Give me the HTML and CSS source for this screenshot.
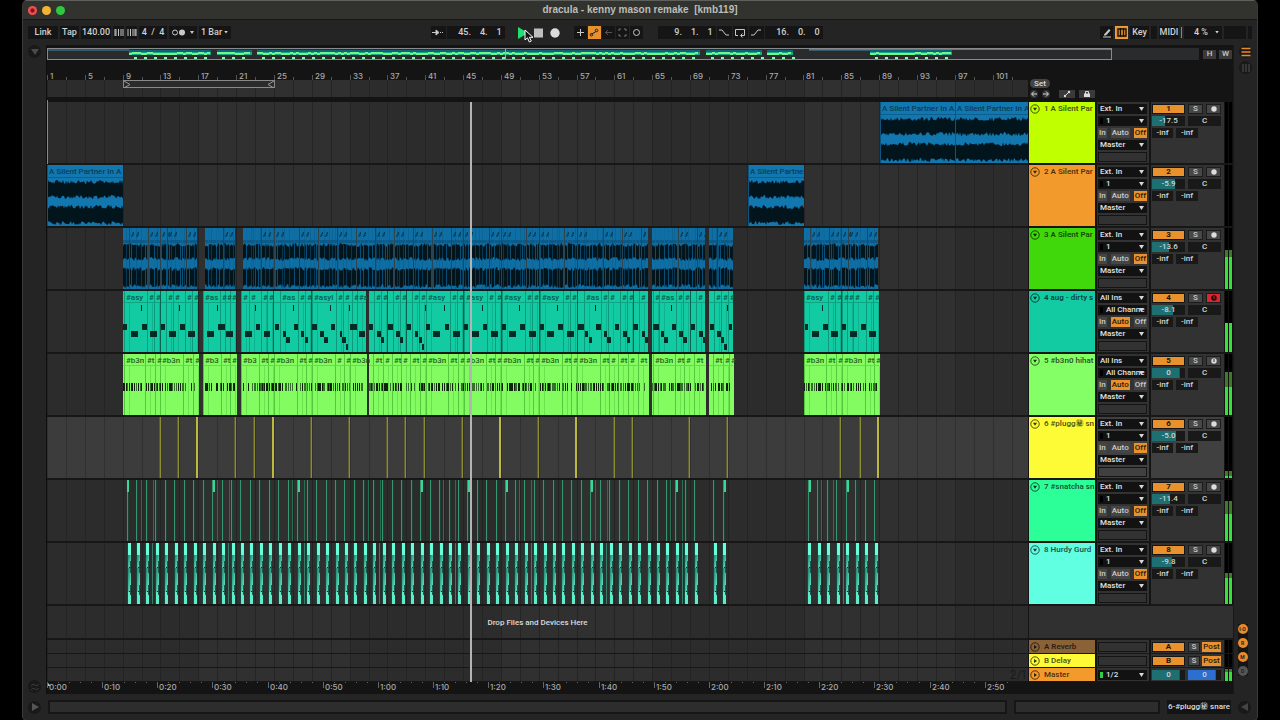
FILE: index.html
```html
<!DOCTYPE html>
<html lang="en">
<head>
<meta charset="utf-8">
<title>dracula - kenny mason remake [kmb119]</title>
<link rel="stylesheet" href="styles.css">
</head>
<body>
<div class="window">
  <header class="titlebar">
    <div class="lights"><button class="light red" aria-label="Close"></button><button class="light amber" aria-label="Minimise"></button><button class="light green" aria-label="Zoom"></button></div>
    <h1 class="title">dracula - kenny mason remake&nbsp; [kmb119]</h1>
  </header>

  <div class="transport">
    <div class="group start">
      <button class="cell w30">Link</button>
      <button class="cell w18">Tap</button>
      <input class="cell w30" aria-label="Tempo" value="140.00">
      <button class="cell w11" aria-label="Nudge down"><svg width="10" height="9"><path d="M1 1v7M2 1v7M4.500 1v7M7 1v7M9 1v7" class="stroke"/></svg></button>
      <button class="cell w11" aria-label="Nudge up"><svg width="10" height="9"><path d="M1 1v7M3.500 1v7M6 1v7M8 1v7M9 1v7" class="stroke"/></svg></button>
      <input class="cell w28" aria-label="Time signature" value="4  /  4">
      <button class="cell w28" aria-label="Metronome"><svg width="24" height="9"><circle cx="4" cy="4.500" r="2.500" class="stroke"/><circle cx="11" cy="4.500" r="3" class="solid"/><path d="M19 3h4l-2 3z" class="solid"/></svg></button>
      <span class="pick w32"><select class="cell" aria-label="Quantization"><option>1 Bar</option></select></span>
    </div>
    <div class="group middle">
      <button class="cell w14" aria-label="Follow"><svg width="12" height="9"><path d="M0 4.500h5M4 2l3 2.500L4 7zM8 4.500h1M10 4.500h1" class="stroke fillin"/></svg></button>
      <input class="cell w58 num" aria-label="Position" value="45.    4.    1">
      <span class="play">
        <button class="bare" aria-label="Play"><svg width="14" height="14"><path d="M2 1l10 6-10 6z" fill="#1fe070"/></svg></button>
        <button class="bare" aria-label="Stop"><svg width="12" height="14"><path d="M1 2.500h9v9H1z" fill="#bfbfbf"/></svg></button>
        <button class="bare" aria-label="Record"><svg width="14" height="14"><circle cx="7" cy="7" r="4.700" fill="#dcdcdc"/></svg></button>
        <svg class="pointer" width="10" height="14"><path d="M1 1v10l2.500-2.200L5.300 13l2-1-1.900-3.700H9z" fill="#111" stroke="#fff"/></svg>
      </span>
      <button class="cell w12" aria-label="Overdub"><svg width="9" height="9"><path d="M4.500 1v7M1 4.500h7" class="stroke"/></svg></button>
      <button class="cell w12 lit" aria-label="Automation arm"><svg width="10" height="9"><path d="M2.500 6.500L4 5l2-.5L7.500 3" stroke="#222" fill="none"/><circle cx="2.500" cy="6.700" r="1.300" fill="none" stroke="#222"/><circle cx="7.500" cy="2.500" r="1.300" fill="none" stroke="#222"/></svg></button>
      <button class="cell w12" aria-label="Re-enable automation"><svg width="9" height="9"><path d="M8 4.500H1M4 2L1.500 4.500 4 7" stroke="#555" fill="none"/></svg></button>
      <button class="cell w12" aria-label="Capture"><svg width="9" height="9"><path d="M1 3V1h2M6 1h2v2M8 6v2H6M3 8H1V6" stroke="#777" fill="none"/></svg></button>
      <button class="cell w12" aria-label="Session record"><svg width="9" height="9"><circle cx="4.500" cy="4.500" r="3" class="stroke"/></svg></button>
      <input class="cell w58 num loopstart" aria-label="Loop start" value="9.    1.    1">
      <button class="cell w14" aria-label="Punch in"><svg width="12" height="9"><path d="M1 2h3l4 5h3" class="stroke"/></svg></button>
      <button class="cell w14" aria-label="Loop"><svg width="12" height="10"><path d="M4 7.500H1.500v-6h9v6H7M8.500 5.500L6.500 7.500l2 2" class="stroke"/></svg></button>
      <button class="cell w14" aria-label="Punch out"><svg width="12" height="9"><path d="M1 7h3l4-5h3" class="stroke"/></svg></button>
      <input class="cell w58 num" aria-label="Loop length" value="16.    0.    0">
    </div>
    <div class="group end">
      <button class="cell w12" aria-label="Draw mode"><svg width="10" height="10"><path d="M2 6.500L7 1l1.500 1.500L4 7.500H2z" class="solid"/><path d="M1 9h8" class="stroke"/></svg></button>
      <button class="cell w12 keys" aria-label="Computer keyboard"><svg width="10" height="9"><path d="M1 1h8v7H1zM3.500 0v9M6.500 0v9" fill="none" stroke="#1c1208" stroke-width="1.400"/></svg></button>
      <button class="cell w18">Key</button>
      <span class="cell w6"></span>
      <button class="cell w20">MIDI</button>
      <span class="bar"></span>
      <span class="pick w38"><select class="cell" aria-label="CPU load"><option>4 %</option></select></span>
      <span class="cell w22"></span>
      <span class="cell w4"></span>
    </div>
  </div>

  <main class="main">
    <aside class="rail left">
      <button class="round" aria-label="Overview"><svg width="12" height="12"><path d="M2 3h8L6 9z" fill="#4a4a4a"/></svg></button>
      <button class="round" aria-label="Automation"><svg width="12" height="12"><path d="M2 5q2-3 4-1t4-1M2 9q2-3 4-1t4-1" fill="none" stroke="#3a3a3a"/></svg></button>
    </aside>

    <section class="arranger">
      <div class="overview">
        <div class="minimap" id="minimap"></div>
        <button class="hw">H</button><button class="hw">W</button>
      </div>
      <div class="top">
        <div class="timeline">
          <div class="ruler" id="ruler"></div>
          <div class="scrub grid"><div class="loop"><svg width="7" height="7"><path d="M0 0l6 3.500L0 7" fill="none" stroke="#999"/></svg><svg width="7" height="7"><path d="M7 0L1 3.500 7 7" fill="none" stroke="#999"/></svg></div></div>
        </div>
        <div class="locators">
          <button class="set">Set</button>
          <div class="tools">
            <button class="dot" aria-label="Previous locator"><svg width="8" height="8"><path d="M7 4H2M4 1.500L1.500 4 4 6.500" stroke="#ddd" fill="none"/></svg></button>
            <button class="dot" aria-label="Next locator"><svg width="8" height="8"><path d="M1 4h5M4 1.500L6.500 4 4 6.500" stroke="#ddd" fill="none"/></svg></button>
            <button class="tool" aria-label="Automation mode"><svg width="8" height="8"><path d="M1.500 6.500l5-5" stroke="#ddd"/><circle cx="2" cy="6" r="1.200" fill="#ddd"/><circle cx="6" cy="2" r="1.200" fill="#ddd"/></svg></button>
            <button class="tool" aria-label="Lock envelopes"><svg width="8" height="8"><path d="M1 3.500h6V7H1z" fill="#ddd"/><path d="M2.500 4V1.500h3V4" stroke="#ddd" fill="none"/></svg></button>
          </div>
        </div>
      </div>
      <div class="tracks" id="tracks"></div>
      <div class="times" id="times"></div>
    </section>

    <aside class="rail right">
      <div class="views">
        <button class="round" aria-label="Arrangement view"><svg width="12" height="12"><path d="M1.500 2.500h9M1.500 6h9M1.500 9.500h9" stroke="#e98b2c" stroke-width="1.600"/></svg></button>
        <button class="round" aria-label="Session view"><svg width="12" height="12"><path d="M3 2v8M6 2v8M9 2v8" stroke="#555"/></svg></button>
      </div>
      <div class="toggles">
        <button class="tog">I·O</button><button class="tog">R</button><button class="tog">M</button><button class="tog off">D</button>
      </div>
    </aside>
  </main>

  <footer class="status">
    <button class="round" aria-label="Show clip view"><svg width="12" height="12"><path d="M3 2l7 4-7 4z" fill="#555"/></svg></button>
    <div class="box wide"></div>
    <div class="box small"></div>
    <div class="sel">6-#plugg㊙ snare</div>
    <button class="round" aria-label="Show device view"><svg width="12" height="12"><path d="M9 2L2 6l7 4z" fill="#444"/></svg></button>
  </footer>
</div>
<script src="app.js"></script>
</body>
</html>
```
FILE: styles.css
```css
* { box-sizing: border-box; }
html, body { margin: 0; background: #000; }
body { font: 500 8px/10px Roboto, "Noto Sans", "Noto Sans CJK JP", sans-serif; color: #d0d0d0; }
button, input, select { font: inherit; color: inherit; border: 0; border-radius: 0; padding: 0; margin: 0; background: none; appearance: none; }
button { display: flex; align-items: center; justify-content: center; white-space: nowrap; }
svg { display: block; flex: none; }
.stroke { fill: none; stroke: #c8c8c8; }
.solid, .fillin { fill: #c8c8c8; }

.window { margin: 0 22px; min-height: 100vh; background: #242424; border: 1px solid #3a3a3a; border-top-color: #5e605c; border-radius: 5px; display: flex; flex-direction: column; overflow: hidden; }
.titlebar { display: grid; grid-template-columns: 1fr auto 1fr; align-items: center; height: 19px; background: #32332e; border-bottom: 1px solid #161616; }
.lights { display: flex; gap: 5px; padding-left: 5px; }
.light { width: 9px; height: 9px; border-radius: 50%; }
.red { background: radial-gradient(#8c0f14 20%, #ed5055 45%); }
.amber { background: #f0b434; }
.green { background: #2fc840; }
.title { margin: 0; font: bold 10px/14px "Liberation Sans", sans-serif; color: #bdbdb8; }

.transport { display: grid; grid-template-columns: 15fr auto 16fr; align-items: center; height: 25px; padding: 0 5px; }
.group { display: flex; gap: 2px; align-items: center; }
.end { justify-content: flex-end; }
.middle { gap: 1px; }
.cell { background: #151515; height: 13px; text-align: center; font-size: 9px; line-height: 13px; color: #d0d0d0; }
input.cell { white-space: pre; }
.w4 { width: 4px; } .w6 { width: 6px; } .w11 { width: 11px; } .w12 { width: 13px; } .w14 { width: 15px; } .w18 { width: 19px; } .w20 { width: 20px; }
.w22 { width: 22px; } .w28 { width: 28px; } .w30 { width: 30px; } .w32 { width: 32px; } .w38 { width: 38px; } .w58 { width: 58px; }
input.num { text-align: right; padding-right: 3px; }
.loopstart { margin-left: 14px; }
.lit { background: #e8912d; }
.keys { background: #e8912d; border: 1px solid #f0a040; }
.bar { width: 1px; height: 11px; background: #c07a20; }
.play { display: flex; gap: 3px; padding: 0 11px 0 10px; position: relative; }
.pointer { position: absolute; left: 18px; top: 3px; }
.pick { position: relative; display: block; min-width: 0; }
.pick select { width: 100%; display: block; text-align: left; padding-left: 2px; }
.pick::after { content: ""; position: absolute; right: 3px; top: calc(50% - 2px); width: 5px; height: 4px; background: #d8d8d8; clip-path: polygon(0 0, 100% 0, 50% 100%); pointer-events: none; }
.transport .pick::after { width: 4px; height: 3px; }
.transport .w38 select { padding-left: 10px; }

.main { display: grid; grid-template-columns: 23px 1fr 24px; flex: 1; }
.rail { display: flex; flex-direction: column; align-items: center; justify-content: space-between; }
.left { padding-bottom: 1px; }
.round { width: 13px; height: 13px; border-radius: 50%; background: #191919; }
.right { padding-bottom: 18px; border-left: 1px solid #191919; }
.views { display: flex; flex-direction: column; gap: 3px; }
.toggles { display: flex; flex-direction: column; gap: 4px; margin-right: 6px; background: #151515; }
.tog { width: 10px; height: 10px; border-radius: 50%; background: #e98b2c; color: #222; font-size: 5px; line-height: 10px; font-weight: 700; }
.tog.off { background: #555; }

.arranger { background: #141414; min-width: 0; border-left: 1px solid #0e0e0e; }
.overview { display: flex; align-items: center; gap: 3px; height: 15px; padding: 3px 1px 0 0; }
.minimap { flex: 1; height: 12px; background: #2a2b2c; overflow: hidden; margin-right: 1px; }
.hw { width: 13px; height: 9px; background: #3a3a3a; color: #ccc; }
.top { display: grid; grid-template-columns: 1fr 205px; height: 42px; }
.timeline { min-width: 0; }
.ruler { height: 20px; overflow: hidden; }
.grid { background-color: #2e2e2e; background-image: repeating-linear-gradient(90deg, #242424 0 1px, transparent 1px calc(100% / 51.87)), repeating-linear-gradient(90deg, #2c2c2c 0 152px, #303030 152px 303px); }
.scrub { height: 17px; }
.loop { display: flex; justify-content: space-between; margin-left: 76px; width: 152px; height: 8px; border: 1px solid #888; position: relative; background: #2b2b2b; }
.locators { padding: 19px 0 0 2px; }
.set { width: 20px; height: 9px; border-radius: 5px; background: #444; color: #ddd; }
.tools { display: flex; gap: 4px; margin-top: 2px; }
.dot { width: 8px; height: 8px; border-radius: 50%; background: #333; }
.tool { width: 16px; height: 8px; background: #3a3a3a; margin-left: 5px; }
.tool + .tool { margin-left: 0; }

.tracks { position: relative; }
.playhead { position: absolute; left: 423px; top: 0; bottom: 0; width: 2px; background: #b4b4b4; }
.startmark { position: absolute; left: 0; top: -2px; height: 64px; border-left: 1px solid #4fa0a5; }
.row { display: grid; grid-template-columns: 1fr 66px 53px 74px 8px; column-gap: 1px; border-bottom: 2px solid #171717; }
.lane { min-width: 0; overflow: hidden; height: 61px; }
.lane.selected { background-color: #3c3c3c; background-image: repeating-linear-gradient(90deg, #303030 0 1px, transparent 1px calc(100% / 51.87)); }
.name { display: flex; gap: 5px; padding: 2px 1px 0; white-space: nowrap; font-weight: 600; color: rgba(0, 0, 0, .7); min-width: 0; }
.name svg { margin-right: -1px; }
.io, .mix { background: #323232; display: flex; flex-direction: column; gap: 2px; padding: 2px 2px 0 1px; min-width: 0; margin-left: 1px; }
.picked .io, .picked .mix { background: #404040; }
.io .pick { height: 10px; }
.io select { height: 10px; background: #121212; color: #e0e0e0; font-size: 8px; line-height: 10px; }
.io .chan select { padding-left: 8px; }
.io .chan::before { content: ""; position: absolute; left: 2px; top: 2px; width: 3px; height: 6px; background: #000; }
.io .stereo::before { background: #30d040; }
.mon { display: flex; justify-content: space-between; gap: 2px; }
.mon button { height: 10px; background: #454545; padding: 0 1px; color: #ccc; }
.mon .on { background: #e8912d; color: #2a1a08; }
.slot { height: 10px; border: 1px solid #141414; }
.pair { display: grid; grid-template-columns: 33px 33px; gap: 3px; }
.half { display: grid; grid-template-columns: 1fr 1fr; gap: 3px; }
.half.post { grid-template-columns: 12px 1fr; gap: 2px; }
.infs { display: grid; grid-template-columns: 21px 22px; gap: 3px; }
.mix button, .val { height: 10px; line-height: 10px; text-align: center; }
.act { background: #e8912d; color: #241505; border: 1px solid #151515; font-weight: 700; }
.sq { background: #474747; color: #ccc; border: 1px solid #1c1c1c; }
.sq.armed { background: #d8272f; }
.sq.sendpost { background: #e8912d; color: #2a1a08; border: 0; }
.val { background: #191919; color: #d4d4d4; width: 100%; min-width: 0; }
.vol { background: linear-gradient(#1d6f72, #1d6f72) 0 0 / var(--v) 100% no-repeat #191919; }
.blue { background-image: linear-gradient(#2c6fd0, #2c6fd0); }
.meter { background: #101010; display: flex; gap: 1px; align-items: stretch; padding-right: 1px; }
.meter i { flex: 1; background: linear-gradient(0deg, #35e23a var(--l), #3f7a2c var(--l) var(--p), #000 var(--p)); }
.drop .lane { height: 32px; text-align: center; line-height: 34px; color: #ddd; }
.drop .rest { grid-column: 2 / -1; background: #303030; }
.return { border-bottom-width: 1px; }
.return .lane { height: 13px; position: relative; }
.return .quant { position: absolute; right: 2px; top: 1px; font: 12px/12px Inter, sans-serif; color: #1b1b1b; }
.times { height: 12px; overflow: hidden; margin-right: 205px; }

.status { display: grid; grid-template-columns: 13px minmax(0, 959px) minmax(0, 1fr) auto 13px; align-items: center; gap: 7px; height: 26px; padding: 0 6px 0 5px; }
.box { height: 14px; background: #2d2d2d; border: 2px solid #161616; }
.sel { height: 14px; line-height: 14px; padding: 0 1px; background: #141414; color: #ddd; font-weight: 500; }

.lbl { font: 500 8px Inter, sans-serif; fill: #aaa; }
.clipname { font: 500 8px Roboto, sans-serif; }
```
FILE: app.js
```js
const BAR = 9.456;
const ORIGIN = 47;
const W = 1400;
const barX = b => (b - 1) * BAR + 0.5;

let seed = 7;
const rnd = () => (seed = (seed * 16807) % 2147483647) / 2147483647;

const rect = (x, y, w, h, fill) => `<rect x="${x}" y="${y}" width="${w}" height="${h}" fill="${fill}"/>`;
const svg = (h, body) => `<svg width="${W}" height="${h}">${body}</svg>`;
const label = (x, w, text, fill) =>
  `<svg x="${x}" y="0" width="${w}" height="12"><text class="clipname" x="0" y="9" fill="${fill}">${text}</text></svg>`;

/* Ragged dark band of an audio clip */
function wave(x0, x1, top, bottom) {
  const up = [], down = [];
  for (let x = x0; x <= x1; x += 1) {
    up.push(`${x},${(top + rnd() * 4).toFixed(1)}`);
    down.unshift(`${x},${(bottom - rnd() * 4).toFixed(1)}`);
  }
  return `<polygon points="${up.concat(down).join(' ')}" fill="#02151d"/>`;
}

function audio(clips) {
  return clips.map(([a, b, text]) => {
    a -= ORIGIN; b -= ORIGIN;
    return rect(a, 0, b - a, 61, '#1277ae') + rect(a, 12, b - a, 1, '#0d5f8e') +
      wave(a, b, 15, 34) + wave(a, b, 40, 60) + rect(a, 0, 1, 61, '#0b5580') +
      label(a + 2, b - a - 2, text, '#073c5c');
  }).join('');
}

const BLOCKS = [[123, 198], [203, 236], [241, 366], [369, 648], [652, 705], [709, 733], [804, 879]];

function chops() {
  const blocks = [[123, 197], [205, 235], [243, 648], [652, 705], [709, 733], [804, 878]];
  const cuts = [129, 148, 160, 167, 186, 223, 261, 274, 299, 318, 337, 356, 375, 394, 413, 432, 451, 463, 489, 501, 526, 539, 564, 577, 603, 622, 641, 678, 697, 717, 810, 829, 841, 848, 867];
  let s = '';
  for (const [a, b] of blocks) {
    const x = a - ORIGIN, w = b - a;
    s += rect(x, 0, w, 61, '#0f6ea4') + rect(x, 12, w, 3, '#0b5a88') + wave(x, x + w, 15, 33) + wave(x, x + w, 39, 60);
    for (let p = x + 3; p < x + w - 1; p += 2 + Math.floor(rnd() * 4)) s += rect(p, 0, 1, 61, rnd() > .5 ? '#0b588480' : '#0d6a9db0');
  }
  for (const c of cuts) {
    s += rect(c - ORIGIN, 0, 1, 61, '#2b4450');
    s += label(c - ORIGIN + 2, 3, 'A', '#063650') + label(c - ORIGIN + 7, 3, 'A', '#063650');
  }
  return s;
}

const CHOP_LABELS = [[126, '#asy'], [149], [156], [168], [175], [187], [194], [205, '#as'], [222], [227], [232], [243], [251], [263], [269], [282, '#as'], [300], [307], [314, '#asyl'], [338], [345], [354], [359, '#a'], [376], [383], [395], [402], [414], [421], [428, '#asy'], [452], [459], [466, '#asy'], [489], [497], [504, '#asy'], [527], [534], [542, '#asy'], [565], [572], [586, '#as'], [603], [610], [622], [629], [641], [655], [661, '#as'], [678], [685], [698], [716], [723], [730], [806, '#asy'], [830], [837], [844], [849], [855], [868], [875]];
const HAT_LABELS = [[126, '#b3n'], [147, '#t'], [157], [162, '#b3n'], [185, '#t'], [195], [205, '#b3'], [223, '#t'], [232], [243, '#b3'], [261, '#t'], [270], [276, '#b3n'], [299, '#t'], [308], [314, '#b3n'], [337], [346], [352, '#b3n'], [375, '#t'], [385], [394, '#t'], [403], [412, '#t'], [422], [428, '#b3n'], [450, '#t'], [460], [466, '#b3n'], [488, '#t'], [497], [503, '#b3n'], [526, '#t'], [535], [541, '#b3n'], [564, '#t'], [573], [579, '#b3n'], [602, '#t'], [611], [620, '#t'], [630], [640, '#t'], [655, '#b3n'], [677, '#t'], [686], [696, '#t'], [715, '#t'], [725], [731], [806, '#b3n'], [828, '#t'], [838], [844, '#b3n'], [867, '#t'], [876]];

const names = (list, fill) => list.map(([x, t = '#']) => label(x - ORIGIN, [0, 5, 8, 14, 18, 21][t.length], t, fill)).join('');
const seams = (list, fill) => list.map(([x]) => rect(x - ORIGIN - 2, 0, 1, 61, fill) + (x < 729 || x > 740 ? rect(x - ORIGIN + 3, 12, 1, 49, fill + '80') : '')).join('');

const NOTES = {
  33: [[123, 4], [142, 5], [161, 4], [180, 5], [218, 7], [256, 4], [275, 4], [294, 4], [312, 5], [331, 4], [350, 7], [369, 4], [388, 5], [407, 4], [426, 4], [445, 4], [464, 4], [483, 4], [502, 4], [520, 5], [540, 4], [558, 5], [578, 6], [596, 5], [615, 4], [633, 5], [653, 6], [672, 4], [691, 4], [710, 4], [729, 3], [805, 3], [823, 5], [842, 4], [861, 5]],
  40: [[131, 7], [150, 7], [169, 7], [188, 7], [207, 7], [226, 7], [245, 7], [264, 6], [283, 3], [301, 3], [320, 4], [340, 2], [359, 6], [377, 4], [396, 4], [415, 3], [433, 7], [453, 7], [472, 7], [491, 7], [509, 7], [529, 7], [547, 7], [567, 7], [585, 3], [604, 3], [623, 4], [642, 3], [661, 3], [679, 4], [699, 4], [717, 4], [812, 7], [831, 7], [850, 7], [869, 7]],
  46: [[286, 4], [305, 3], [324, 4], [342, 4], [381, 3], [400, 3], [419, 3], [589, 3], [607, 4], [627, 3], [645, 3], [664, 4], [683, 4], [703, 2], [721, 3]],
  53: [[346, 2], [422, 2], [724, 3]],
  14: [[141, 1], [179, 1], [217, 1], [255, 1], [293, 1], [330, 1], [349, 1], [425, 1], [444, 1], [482, 1], [519, 1], [557, 1], [595, 1], [671, 1], [727, 1], [822, 1]]
};

function melody() {
  let s = BLOCKS.map(([a, b]) => rect(a - ORIGIN, 0, b - a, 61, '#12cba2')).join('');
  s += seams(CHOP_LABELS, '#0b9a7c');
  s += BLOCKS.map(([a, b]) => rect(a - ORIGIN, 11, b - a, 1, '#0fa384')).join('');
  s += [160, 273, 311, 387, 406, 463, 501, 539, 577, 633, 690, 841].map(x => rect(x - ORIGIN, 0, 1, 61, '#08624f')).join('');
  for (const y in NOTES) s += NOTES[y].map(([x, w]) => rect(x - ORIGIN, y, w, 6, '#042b24')).join('');
  return s + names(CHOP_LABELS, '#075c4b');
}

function hats() {
  let s = BLOCKS.map(([a, b]) => rect(a - ORIGIN, 0, b - a + 1, 61, '#83fc62')).join('');
  s += seams(HAT_LABELS, '#55c73c');
  for (const [a, b] of BLOCKS) {
    s += rect(a - ORIGIN, 11, b - a, 1, '#6ad850');
    for (let x = a; x < b - 1; x += 1 + Math.floor(rnd() * 2)) {
      const t = rnd();
      if (t > .2) s += rect(x - ORIGIN, 29, 1, 8, t > .55 ? '#0c2408' : '#33702a');
    }
  }
  return s + names(HAT_LABELS, '#23631a');
}

function rolls() {
  const thin = [160, 178, 235, 254, 311, 349, 387, 405, 424, 462, 538, 614, 632, 689, 727, 840, 860];
  const wide = [196, 272, 499, 575, 877];
  return thin.map(x => rect(x - ORIGIN - 1, 0, 1, 61, '#5d5c2a') + rect(x - ORIGIN, 0, 1, 61, '#8e8c30')).join('') +
    wide.map(x => rect(x - ORIGIN, 0, 2, 61, '#bdb93c')).join('');
}

const beats = () => {
  const out = [];
  for (let k = 0; k < 80; k++) {
    const x = 127.5 + k * BAR;
    if ((x > 648 && x < 655) || (x > 700 && x < 712) || (x > 730 && x < 804)) continue;
    out.push(x - ORIGIN);
  }
  return out;
};

function snares() {
  const heads = [127, 213, 298, 421, 468, 506, 591, 676, 724, 809, 847];
  let s = beats().map(x => rect(Math.floor(x), 0, 1, 61, '#37966f') + rect(Math.floor(x) + 1, 0, 1, 61, '#1a4234')).join('');
  for (let k = 0; k < 10; k++) for (const d of [141, 153]) {
    const x = Math.round(d + k * 75.6);
    if (x < 733 || x > 804) s += rect(x - ORIGIN, 0, 1, 61, '#26704f');
  }
  return s + heads.map(x => rect(x - ORIGIN, 0, 2, 12, '#37d898')).join('');
}

function kicks() {
  return '<defs><linearGradient id="tail" x1="0" x2="1" y1="0" y2="1"><stop offset="0" stop-color="#23806b"/><stop offset="1" stop-color="#62f5d2"/></linearGradient></defs>' +
    beats().map((v, i) => {
      const x = Math.round(v);
      return rect(x - 1, 0, 1, 61, '#144a3d') + rect(x, 0, 3, 12, '#66ffdc') + rect(x, 12, 3, 13, 'url(#tail)') +
        rect(x, 25, 3, 24, 'url(#tail)') + rect(x, 49, 3, 12, '#5ceecb') +
        rect(x + 1, 24, 3, 1, '#0a2a22') + rect(x + 1, 48, 3, 1, '#0a2a22') + rect(x + 2, 18, 1, 12, '#1c5c4c') + rect(x + 2, 42, 1, 10, '#1c5c4c') +
        (i % 8 === 2 ? rect(x + 6, 0, 1, 61, '#3a7a68') : '');
    }).join('');
}

const LONG = 'A Silent Partner In A';
const TRACKS = [
  ['1 A Silent Par', '#bfff00', audio([[880, 955, LONG], [955, 1028, LONG]]), '-17.5', 40, 0, 0],
  ['2 A Silent Par', '#f39a2c', audio([[47, 123, LONG], [748, 804, 'A Silent Partner']]), '-5.9', 70, 0, 0],
  ['3 A Silent Par', '#40d80a', chops(), '-13.6', 52, 52, 64],
  ['4 aug - dirty s', '#12cba2', melody(), '-8.1', 64, 47, 47, 'midi armed'],
  ['5 #b3n0 hihat', '#85ff66', hats(), '0', 84, 46, 70, 'midi'],
  ['6 #plugg㊙ sn', '#fdfb35', rolls(), '-5.0', 74, 3, 12, 'picked'],
  ['7 #snatcha sn', '#2dff98', snares(), '-11.4', 56, 44, 65],
  ['8 Hurdy Gurd', '#60ffe2', kicks(), '-9.8', 60, 43, 50]
];

const fold = open => `<svg width="10" height="10"><circle cx="5" cy="5" r="4.200" fill="none" stroke="#000a"/><path d="${open ? 'M3 3.800h4L5 6.800z' : 'M4 3l3 2-3 2z'}" fill="#000c"/></svg>`;
const pick = (name, text, cls = '') => `<span class="pick ${cls}"><select aria-label="${name}"><option>${text}</option></select></span>`;
const meter = (l, p) => `<div class="meter"><i style="--l:${l}%;--p:${p}%"></i><i style="--l:${l}%;--p:${p}%"></i></div>`;
const val = (name, v, cls = '', fill) => `<input class="val ${cls}" aria-label="${name}" value="${v}"${fill ? ` style="--v:${fill}%"` : ''}>`;

const rows = TRACKS.map(([name, color, body, vol, fill, l, p, flags = ''], i) => {
  const midi = flags.includes('midi'), armed = flags.includes('armed');
  const dot = `<svg width="8" height="8"><circle cx="4" cy="4" r="2.700" fill="${armed ? '#220507' : '#ddd'}"/>${midi ? `<path d="M4 2v3" stroke="${armed ? '#d8272f' : '#333'}"/>` : ''}</svg>`;
  return `<div class="row ${flags}">
    <div class="lane grid ${flags === 'picked' ? 'selected' : ''}">${svg(61, body)}</div>
    <div class="name" style="background:${color}">${fold(true)}<span>${name}</span></div>
    <div class="io">
      ${pick('Input type', midi ? 'All Ins' : 'Ext. In')}
      ${pick('Input channel', midi ? 'All Channe' : '1', 'chan')}
      <div class="mon"><button>In</button><button class="${midi ? 'on' : ''}">Auto</button><button class="${midi ? '' : 'on'}">Off</button></div>
      ${pick('Output', 'Master')}
      <div class="slot"></div>
    </div>
    <div class="mix">
      <div class="pair"><button class="act">${i + 1}</button><div class="half"><button class="sq">S</button><button class="sq ${armed ? 'armed' : ''}" aria-label="Arm">${dot}</button></div></div>
      <div class="pair">${val('Volume', vol, 'vol', fill)}${val('Pan', 'C')}</div>
      <div class="infs">${val('Send A', '-inf')}${val('Send B', '-inf')}</div>
    </div>
    ${meter(l, p)}
  </div>`;
});

rows.push('<div class="row drop"><div class="lane grid">Drop Files and Devices Here</div><div class="rest"></div></div>');

for (const [n, name, color] of [['A', 'A Reverb', '#8a6238'], ['B', 'B Delay', '#fdfb35']]) {
  rows.push(`<div class="row return"><div class="lane grid"></div>
    <div class="name" style="background:${color}">${fold(false)}<span>${name}</span></div>
    <div class="io"><div class="slot"></div></div>
    <div class="mix"><div class="pair"><button class="act">${n}</button><div class="half post"><button class="sq">S</button><button class="sq sendpost">Post</button></div></div></div>
    ${meter(0, 0)}</div>`);
}
rows.push(`<div class="row return"><div class="lane grid"><span class="quant">2/1</span></div>
  <div class="name" style="background:#f39a2c">${fold(false)}<span>Master</span></div>
  <div class="io">${pick('Master output', '1/2', 'chan stereo')}</div>
  <div class="mix"><div class="pair">${val('Master volume', '0', 'vol', 84)}${val('Cue volume', '0', 'vol blue', 84)}</div></div>
  ${meter(70, 90)}</div>`);
document.getElementById('tracks').innerHTML = rows.join('') + '<div class="startmark"></div><div class="playhead"></div>';

/* Bar ruler */
let marks = '';
for (let b = 1; b <= 103; b += 2) {
  const x = Math.round(barX(b) - .5);
  marks += rect(x, b % 4 === 1 ? 15 : 17, 1, 5, '#555');
  if (b % 4 === 1) marks += `<text class="lbl" x="${x + 3}" y="19">${b}</text>`;
}
document.getElementById('ruler').innerHTML = svg(20, marks);

/* Clock ruler */
marks = '<path d="M0 0l4 4H0z" fill="#9cc"/>';
for (let t = 0; t <= 175; t += 2) {
  const x = Math.round(t * 5.516);
  marks += rect(x, 0, 1, t % 10 ? 1 : 6, '#666');
  if (t % 10 === 0) marks += `<text class="lbl" x="${x + 2}" y="8">${Math.floor(t / 60)}:${String(t % 60).padStart(2, '0')}</text>`;
}
document.getElementById('times').innerHTML = svg(12, marks);

/* Song overview */
let mini = rect(0, 1, 82, 2, '#34586c') + rect(762, 1, 303, 1, '#4d7f9c') + rect(762, 2, 100, 1, '#34586c');
for (const [a, b] of [[129, 211], [217, 252], [257, 700], [706, 762], [767, 793], [870, 952]]) {
  mini += rect(a - ORIGIN, 2, b - a, 2, '#146079') + rect(a - ORIGIN, 4, b - a, 3, '#17a982');
  for (let x = a; x < b - 3; x += 3) mini += rect(x - ORIGIN, 4 + Math.round(rnd()), 3, 2, '#73f58c');
  for (let x = a + 5; x < b; x += 10) mini += rect(x - ORIGIN, 9, 3, 2, '#7dffae');
}
mini += '<rect x=".5" y=".5" width="1064" height="11" fill="none" stroke="#8a8a8a"/>' + rect(458, 1, 1, 10, '#aaa');
document.getElementById('minimap').innerHTML = svg(12, mini);
```
